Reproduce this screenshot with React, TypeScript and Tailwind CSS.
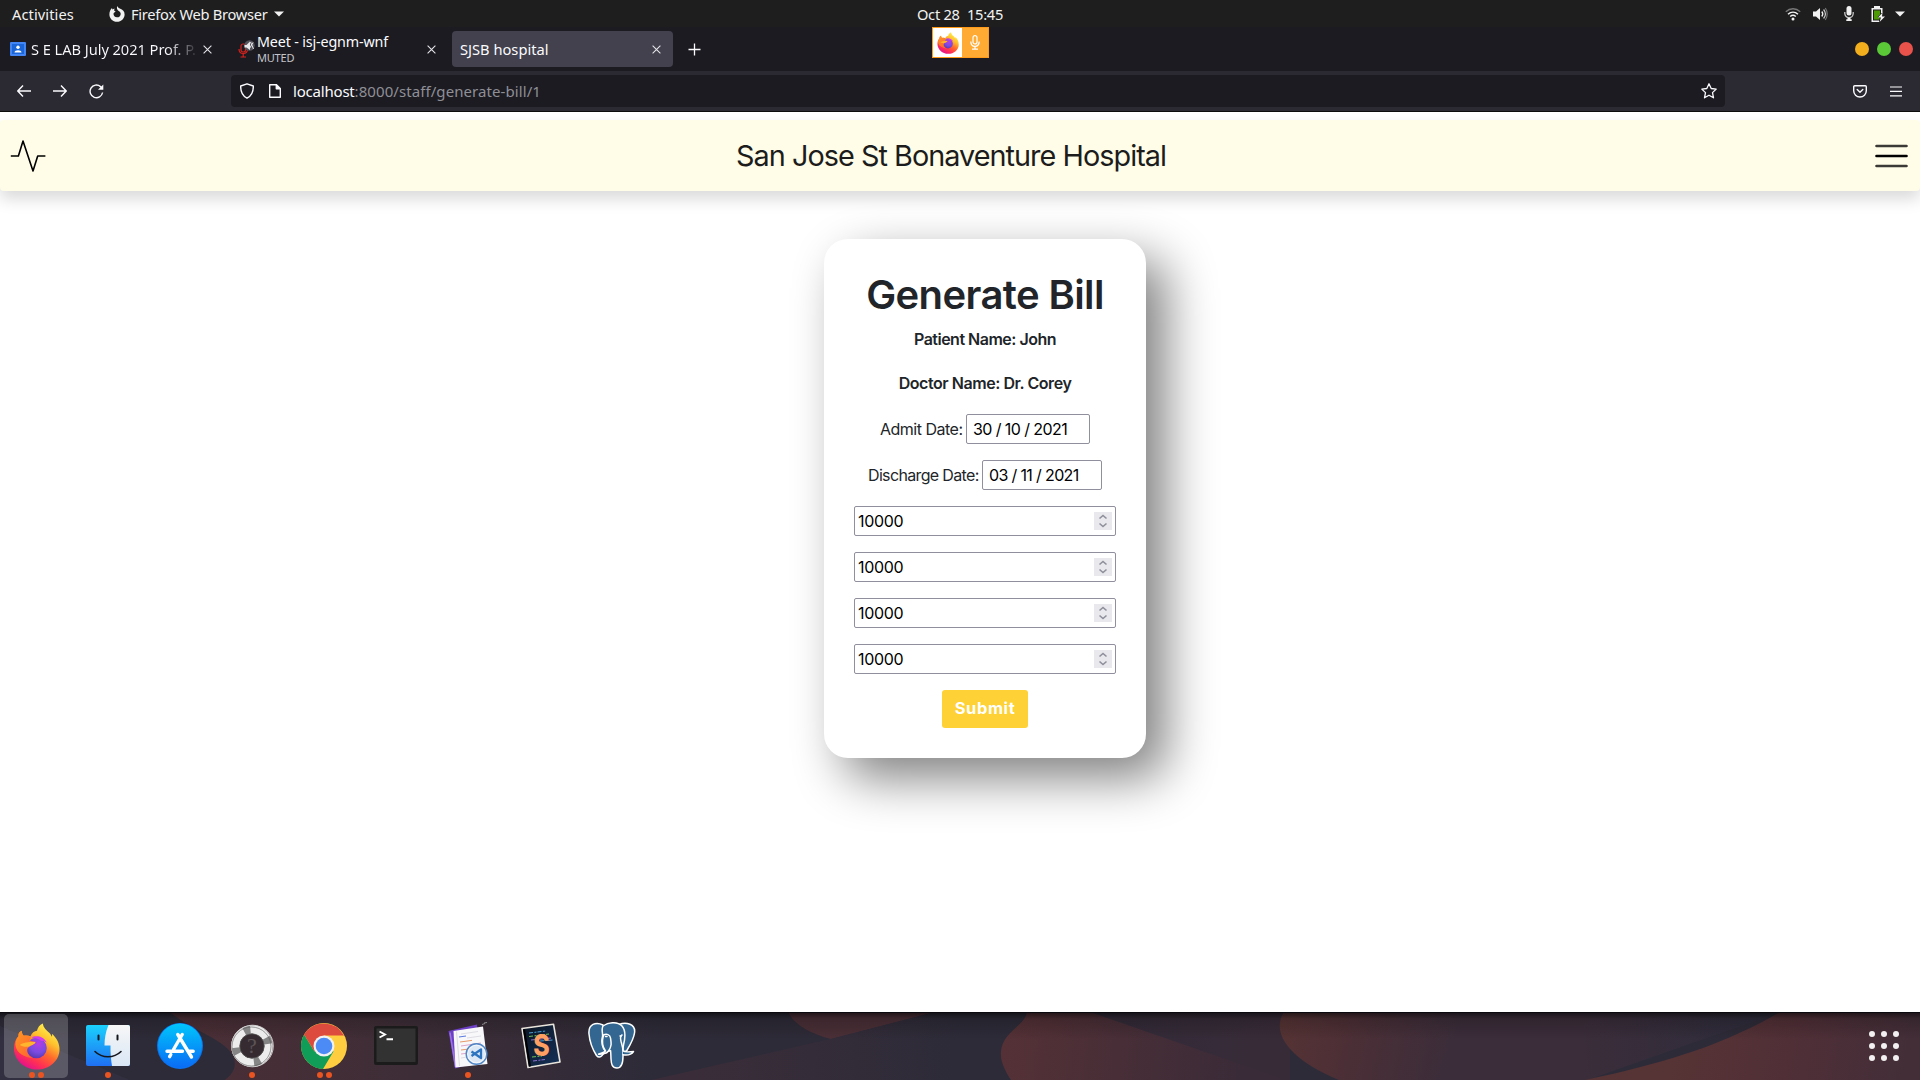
import React from "react";

const ubuntu = "font-['Noto_Sans',sans-serif]";
const product = "font-['Inter',sans-serif]";

function FirefoxLogo({ size, id }: { size: number; id: string }) {
  return (
    <svg width={size} height={size} viewBox="0 0 48 48">
      <defs>
        <linearGradient id={id + "a"} x1="0.8" y1="0.05" x2="0.25" y2="0.95">
          <stop offset="0" stopColor="#fff44f" />
          <stop offset="0.3" stopColor="#ffc02e" />
          <stop offset="0.55" stopColor="#ff6a2b" />
          <stop offset="0.8" stopColor="#ff2f55" />
          <stop offset="1" stopColor="#e3128c" />
        </linearGradient>
        <radialGradient id={id + "b"} cx="0.6" cy="0.3" r="0.7">
          <stop offset="0" stopColor="#b53be8" />
          <stop offset="0.6" stopColor="#7a4be0" />
          <stop offset="1" stopColor="#5b3bb5" />
        </radialGradient>
        <linearGradient id={id + "c"} x1="0" y1="0" x2="1" y2="1">
          <stop offset="0" stopColor="#ff9a1f" />
          <stop offset="1" stopColor="#ff5a36" />
        </linearGradient>
      </defs>
      <path
        d="M30.5 0.5C31 5 34 7 37 10c1 1 2 2.300 2.500 4 .5-.8.6-2 .5-3 4.500 4.500 7.500 9.500 7.500 16C47.500 38.500 37 47.500 24.500 47.500S1 38 1 26c0-6 2-10 4.500-12.500C5.300 10.500 7 8.500 9 8c-.2 2 .6 4 2 5 2-.6 5-.3 7 .5 1-3.500 4-5 6.500-5.500C25 5 27 2 30.500.5Z"
        fill={"url(#" + id + "a)"}
      />
      <circle cx="24" cy="25.500" r="10.500" fill={"url(#" + id + "b)"} />
      <path d="M19 15c4-2.500 12-2 15.500 5-2-1.500-4-2-5.500-1.500-3-3-6.500-3-10-3.500Z" fill="#d43bea" />
      <path
        d="M5.500 13.500C5.300 10.500 7 8.500 9 8c-.2 2 .6 4 2 5 2.500-.5 5-.2 7 1-1 2-.5 3.500 0 4.500 2 .3 4 .5 5 1-.5 2.500-4 3-6 4.500-1.500 1-2.500 2-2.500 4 0 3 2 6 6 8C12 35 3 31 2.500 22c.2-4 1.500-6.800 3-8.500Z"
        fill={"url(#" + id + "c)"}
      />
      <path d="M7 22.500c3-2.500 8-3 16-3-1 3-4.500 3-6.500 4.500-4 .8-7 0-9.500-1.500Z" fill="#ffb52e" />
    </svg>
  );
}

function TopBar() {
  return (
    <div className={`flex h-[27px] items-center justify-between bg-[#1e1e1e] text-[14.670px] text-[#f2f2f2] ${ubuntu}`}>
      <div className="flex w-[900px] items-center pl-3">
        <span className="w-[97px] whitespace-nowrap tracking-[0.080px]">Activities</span>
        <svg width="16" height="16" viewBox="0 0 16 16" className="mr-[6px]">
          <path
            d="M8.500 0c.2 1.300 1 2 2.300 2.600C13.800 3.500 15.600 5.500 15.600 8.400c0 4.100-3.400 7.300-7.600 7.300S.4 12.500.4 8.400C.4 5.600 1.400 3.400 3 2l.4 1.400 2-.8-.2 2.200 1.500.6c-.9.6-2 1-2.200 2.400C4.400 9.700 5.800 11.300 8 11.300s3.700-1.500 3.700-3.400c0-1.500-.8-2.500-2-3C8 4 7.300 1.700 8.500 0Z"
            fill="#f2f2f2"
          />
        </svg>
        <span className="w-[137px] whitespace-nowrap tracking-[-0.270px]">Firefox Web Browser</span>
        <svg width="10" height="6" viewBox="0 0 10 6" className="ml-[6px]">
          <path d="M0 .5h10L5 5.500Z" fill="#f2f2f2" />
        </svg>
      </div>
      <div className="whitespace-pre tracking-[-0.250px]">Oct 28  15:45</div>
      <div className="flex w-[900px] items-center justify-end pr-[15px]">
        <svg width="16" height="14" viewBox="0 0 16 14" fill="none" className="mr-[12px]">
          <path d="M.8 4.800C5 .8 11 .8 15.200 4.800" stroke="#777" strokeWidth="1.400" />
          <path d="M3 7.200c3-2.700 7-2.700 10 0M5.200 9.500c1.800-1.500 3.800-1.500 5.600 0" stroke="#f2f2f2" strokeWidth="1.500" />
          <circle cx="8" cy="12" r="1.500" fill="#f2f2f2" />
        </svg>
        <svg width="15" height="14" viewBox="0 0 15 14" fill="none" className="mr-[16px]">
          <path d="M0 4.500h3L7 1v12L3 9.500H0Z" fill="#f2f2f2" />
          <path d="M8.800 4.500c1.200 1.500 1.200 3.500 0 5" stroke="#f2f2f2" strokeWidth="1.300" />
          <path d="M10.600 2.500c2.200 2.700 2.200 6.300 0 9" stroke="#ccc" strokeWidth="1.200" />
          <path d="M12.300 1c2.500 3.500 2.500 8.500 0 12" stroke="#777" strokeWidth="1.200" />
        </svg>
        <svg width="10" height="15" viewBox="0 0 10 15" fill="none" className="mr-[17px]">
          <rect x="2.500" y="0" width="5" height="9.500" rx="2.500" fill="#f2f2f2" />
          <path d="M.8 6v1.500a4.200 4.200 0 0 0 8.400 0V6" stroke="#c8c8c8" strokeWidth="1.300" />
          <path d="M3.500 12h3v1.200h1.200V15H2.300v-1.800h1.200Z" fill="#f2f2f2" />
        </svg>
        <svg width="14" height="16" viewBox="0 0 14 16" className="mr-[10px]">
          <path d="M3 0h6v2h2.500v5H10V3.500H2v11h6V16H.5V2H3Z" fill="#f2f2f2" />
          <path d="M3 4.500h6v4L6.500 11l2 1v1.500H3Z" fill="#4e9a06" />
          <path d="M11.500 6.500 7 11.500h3L8.500 16 14 10.500h-3Z" fill="#f2f2f2" />
        </svg>
        <svg width="10" height="6" viewBox="0 0 10 6">
          <path d="M0 .5h10L5 5.500Z" fill="#f2f2f2" />
        </svg>
      </div>
    </div>
  );
}

function Close() {
  return (
    <svg width="9" height="9" viewBox="0 0 9 9" stroke="#e4e4e8" strokeWidth="1.100" className="shrink-0">
      <path d="M.6.6l7.800 7.800M8.400.6L.6 8.400" />
    </svg>
  );
}

function TabBar() {
  return (
    <div className={`flex h-[44px] items-center bg-[#1c1b22] text-[14.670px] text-[#fbfbfe] ${ubuntu}`}>
      <div className="flex w-[229px] items-center pl-[10px]">
        <svg width="16" height="14" viewBox="0 0 16 14" className="mr-[5px] shrink-0">
          <rect width="16" height="14" rx="1" fill="#4285f4" />
          <rect x="2" y="2" width="12" height="10" fill="#1a66d8" />
          <circle cx="8" cy="5.300" r="1.700" fill="#fff" />
          <path d="M4.500 10.500c0-3 7-3 7 0Z" fill="#fff" />
        </svg>
        <div className="mr-[6px] w-[166px] overflow-hidden whitespace-nowrap bg-gradient-to-r from-[#fbfbfe] from-[82%] to-[#fbfbfe10] bg-clip-text tracking-[-0.060px] text-transparent">
          S E LAB July 2021 Prof. P.
        </div>
        <Close />
      </div>
      <div className="flex w-[223px] items-center pl-[9px]">
        <svg width="18" height="20" viewBox="0 0 18 20" fill="none" className="mr-px shrink-0">
          <rect x="3" y="5" width="4.500" height="8" rx="2" stroke="#d7221c" strokeWidth="1.200" />
          <path d="M1 10c0 6 8.500 6 8.500 0M5.200 14.500V18M2.500 18h5.500" stroke="#d7221c" strokeWidth="1.200" />
          <circle cx="11.500" cy="6.500" r="5.200" fill="#55545c" />
          <path d="M6.500 6h2L12 2.500V11L8.500 8.500h-2Z" fill="#e8e8ea" />
          <path d="M12.500 3l3 7M15 3.500l-3.500 6" stroke="#e8e8ea" strokeWidth="1" />
        </svg>
        <div className="w-[170px]">
          <div className="text-[14.300px] leading-[16px] whitespace-nowrap tracking-[-0.150px]">Meet - isj-egnm-wnf</div>
          <div className="text-[11px] leading-[15px] tracking-[-0.200px] text-[#c4c4c9]">MUTED</div>
        </div>
        <Close />
      </div>
      <div className="flex h-9 w-[221px] items-center justify-between rounded-[4px] bg-[#42414d] pr-[12px] pl-2">
        <span>SJSB hospital</span>
        <Close />
      </div>
      <svg width="13" height="13" viewBox="0 0 13 13" className="ml-[15px]" stroke="#fbfbfe" strokeWidth="1.300">
        <path d="M6.500.5v12M.5 6.500h12" />
      </svg>
      <div className="ml-[231px] flex h-[31px] w-[57px] self-start border border-[#ff9a1a] bg-[#ffaa33]">
        <div className="flex w-[29px] items-center justify-center bg-white">
          <FirefoxLogo size={22} id="mini" />
        </div>
        <div className="flex flex-1 items-center justify-center">
          <svg width="10" height="15" viewBox="0 0 10 15" fill="none" stroke="#fff" strokeWidth="1.200">
            <rect x="3" y=".7" width="4" height="8.300" rx="2" />
            <path d="M.8 6.500c0 6.500 8.400 6.500 8.400 0M5 11.500V14M2 14.200h6" />
          </svg>
        </div>
      </div>
      <div className="mr-[7px] ml-auto flex items-center gap-2">
        <span className="size-[14px] rounded-full bg-[#f2ae1c]" />
        <span className="size-[14px] rounded-full bg-[#5ac837]" />
        <span className="size-[14px] rounded-full bg-[#e9524a]" />
      </div>
    </div>
  );
}

function Toolbar() {
  return (
    <div className={`flex h-[41px] items-center border-b border-[#0c0c0d] bg-[#2b2a33] text-[#fbfbfe] ${ubuntu}`}>
      <div className="flex w-[231px] items-center pl-[17px]">
        <svg width="14" height="12" viewBox="0 0 14 12" fill="none" stroke="#fbfbfe" strokeWidth="1.400" className="mr-[22px]">
          <path d="M14 6H.8M6 .5.8 6 6 11.500" />
        </svg>
        <svg width="14" height="12" viewBox="0 0 14 12" fill="none" stroke="#fbfbfe" strokeWidth="1.400" className="mr-[22px]">
          <path d="M0 6h13.200M8 .5 13.200 6 8 11.500" />
        </svg>
        <svg width="15" height="15" viewBox="0 0 15 15" fill="none">
          <path d="M13.600 8.500A6.300 6.300 0 1 1 11.500 2.600L12.800 4" stroke="#fbfbfe" strokeWidth="1.400" />
          <path d="M14.300.5v5.200H9Z" fill="#fbfbfe" />
        </svg>
      </div>
      <div className="flex h-8 w-[1494px] items-center rounded-[4px] bg-[#1c1b22] pr-2 pl-[9px]">
        <svg width="14" height="16" viewBox="0 0 14 16" fill="none" stroke="#fbfbfe" strokeWidth="1.400" strokeLinejoin="round" className="mr-[15px]">
          <path d="M7 .8 13.300 3c.2 5.800-1.800 10-6.300 12.200C2.500 13 .5 8.800.7 3Z" />
        </svg>
        <svg width="12" height="14" viewBox="0 0 12 14" fill="none" stroke="#fbfbfe" strokeWidth="1.400" strokeLinejoin="round" className="mr-[12px]">
          <path d="M.7.7h6.600l4 4v8.600H.7Z" />
          <path d="M7.300.7v4h4Z" fill="#fbfbfe" />
        </svg>
        <div className="pt-px text-[15px] whitespace-nowrap tracking-[0.080px]">
          <span className="tracking-[-0.200px]">localhost</span>
          <span className="text-[#8f8f96]">:8000/staff/generate-bill/1</span>
        </div>
        <svg width="16" height="16" viewBox="0 0 16 16" fill="none" stroke="#fbfbfe" strokeWidth="1.300" strokeLinejoin="round" className="ml-auto">
          <path d="m8 .8 2.200 4.700 5 .6-3.700 3.500 1 5.200L8 12.200l-4.500 2.600 1-5.200L.8 6.100l5-.6Z" />
        </svg>
      </div>
      <div className="ml-auto flex items-center gap-[23px] pr-[18px]">
        <svg width="14" height="13" viewBox="0 0 14 13" fill="none" stroke="#fbfbfe" strokeWidth="1.400" strokeLinecap="round" strokeLinejoin="round">
          <path d="M1.700.7h10.600a1 1 0 0 1 1 1v4a6.300 6.300 0 0 1-12.600 0v-4a1 1 0 0 1 1-1Z" />
          <path d="M4.200 4.500 7 7.200l2.800-2.700" />
        </svg>
        <svg width="12" height="11" viewBox="0 0 12 11" stroke="#fbfbfe" strokeWidth="1.200">
          <path d="M0 1h12M0 5.400h12M0 9.800h12" />
        </svg>
      </div>
    </div>
  );
}

function NumberField() {
  return (
    <div className="flex h-[30px] w-[262px] items-center justify-between rounded-[2px] border border-[#8f8f9d] pr-[3px] pl-[3px] text-black">
      <span className="-mt-px tracking-[-0.300px]">10000</span>
      <svg width="18" height="18" viewBox="0 0 18 18" fill="none" stroke="#8f8f9d" strokeWidth="1.600">
        <rect width="18" height="18" fill="#e9e9ed" stroke="none" />
        <path d="M5.500 6.500 9 3.500l3.500 3M5.500 11.500l3.500 3 3.500-3" />
      </svg>
    </div>
  );
}

function Page() {
  return (
    <main className={`flex h-[900px] flex-col items-center bg-white pt-2 text-[#212529] ${product}`}>
      <nav className="flex h-[71px] w-full items-center justify-between rounded-[4px] bg-[#fffde7] pr-[11px] pl-[10px] shadow-[0_8px_16px_rgba(0,0,0,0.15)]">
        <svg width="36" height="34" viewBox="0 0 36 34" fill="none" stroke="#000" strokeWidth="1.600" strokeLinejoin="round">
          <path d="M.8 17h7.600L13 2l10 30 4.700-15h7.700" />
        </svg>
        <h1 className="-ml-[19px] text-[28.800px] whitespace-nowrap tracking-[-0.960px] text-[#1c1c1c]">San Jose St Bonaventure Hospital</h1>
        <svg width="34" height="24" viewBox="0 0 34 24" strokeWidth="2.600" strokeLinecap="round">
          <path d="M1.500 2h30M1.500 22h30" stroke="#3b3a36" />
          <path d="M1.500 12h30" stroke="#000" />
        </svg>
      </nav>
      <form className="mt-12 ml-[50px] flex h-[519px] w-[322px] flex-col items-center rounded-[24px] bg-white text-[16px] leading-6 shadow-[20px_20px_50px_grey]">
        <h2 className="mt-8 text-[40px] leading-[48px] font-semibold whitespace-nowrap tracking-[-0.600px]">Generate Bill</h2>
        <p className="mt-2 font-semibold whitespace-nowrap tracking-[-0.500px]">Patient Name: John</p>
        <p className="mt-5 font-semibold whitespace-nowrap tracking-[-0.440px]">Doctor Name: Dr. Corey</p>
        <div className="mt-[19px] flex items-center gap-1">
          <span className="-mt-px w-[82px] whitespace-nowrap tracking-[-0.500px]">Admit Date:</span>
          <div className="flex h-[30px] w-[124px] items-center rounded-[2px] border border-[#8f8f9d] pb-px pl-[6px] whitespace-nowrap tracking-[-0.580px] text-black">30 / 10 / 2021</div>
        </div>
        <div className="mt-4 flex items-center gap-[3px]">
          <span className="-mt-px w-[111px] whitespace-nowrap tracking-[-0.650px]">Discharge Date:</span>
          <div className="flex h-[30px] w-[120px] items-center rounded-[2px] border border-[#8f8f9d] pb-px pl-[6px] whitespace-nowrap tracking-[-0.650px] text-black">03 / 11 / 2021</div>
        </div>
        <div className="mt-4 flex flex-col gap-4">
          <NumberField />
          <NumberField />
          <NumberField />
          <NumberField />
        </div>
        <button type="button" className="mt-4 h-[38px] w-[86px] rounded-[3px] bg-[#fed136] pb-[2px] text-[16.500px] font-bold tracking-[0.600px] text-white">
          Submit
        </button>
      </form>
    </main>
  );
}

function Wallpaper() {
  return (
    <svg width="1920" height="68" viewBox="0 0 1920 68" className="absolute inset-0">
      <defs>
        <linearGradient id="w1" gradientUnits="userSpaceOnUse" x1="170" y1="0" x2="660" y2="0">
          <stop offset="0" stopColor="#4c2f36" />
          <stop offset="0.5" stopColor="#3d2d37" />
          <stop offset="1" stopColor="#2d2b38" />
        </linearGradient>
        <linearGradient id="w2" gradientUnits="userSpaceOnUse" x1="690" y1="60" x2="960" y2="40">
          <stop offset="0" stopColor="#3a2d39" />
          <stop offset="1" stopColor="#2d2b38" />
        </linearGradient>
        <linearGradient id="w3" gradientUnits="userSpaceOnUse" x1="1000" y1="30" x2="1240" y2="60">
          <stop offset="0" stopColor="#553136" />
          <stop offset="1" stopColor="#3a2b38" />
        </linearGradient>
        <linearGradient id="w4" gradientUnits="userSpaceOnUse" x1="1280" y1="10" x2="1450" y2="50">
          <stop offset="0" stopColor="#563334" />
          <stop offset="0.4" stopColor="#4c2f36" />
          <stop offset="1" stopColor="#3b2d3a" />
        </linearGradient>
        <linearGradient id="w5" gradientUnits="userSpaceOnUse" x1="1680" y1="20" x2="1900" y2="70">
          <stop offset="0" stopColor="#563334" />
          <stop offset="0.5" stopColor="#502f37" />
          <stop offset="1" stopColor="#432e38" />
        </linearGradient>
        <linearGradient id="w6" gradientUnits="userSpaceOnUse" x1="1090" y1="0" x2="1280" y2="0">
          <stop offset="0" stopColor="#322b38" />
          <stop offset="1" stopColor="#382b38" />
        </linearGradient>
        <linearGradient id="w7" gradientUnits="userSpaceOnUse" x1="1580" y1="0" x2="1780" y2="0">
          <stop offset="0" stopColor="#2d2c3b" stopOpacity="0" />
          <stop offset="1" stopColor="#2d2c3b" />
        </linearGradient>
        <linearGradient id="wt" x1="0" y1="0" x2="0" y2="1">
          <stop offset="0" stopColor="#000" stopOpacity="0.6" />
          <stop offset="0.1" stopColor="#000" stopOpacity="0.18" />
          <stop offset="0.4" stopColor="#000" stopOpacity="0" />
        </linearGradient>
      </defs>
      <rect width="1920" height="68" fill="#2e2b38" />
      <path d="M0 14 130 68H0Z" fill="#323040" />
      <path d="M170 0C190 18 228 28 234 46c3 10-2 16-9 22H660V0Z" fill="url(#w1)" />
      <path d="M788 0c6 12 20 21 43 27L935 0Z" fill="#4a2f37" />
      <path d="M652 68 831 27 935 0h90v68Z" fill="url(#w2)" />
      <path d="M1085 0h205v68h-50Z" fill="url(#w6)" />
      <path d="M1027 0c-2 14-25 20-26 40-1 10 5 20 10 28h269v-2L1090 0Z" fill="url(#w3)" />
      <path d="M1284 0c-12 18 0 45 55 68h248L1780 0Z" fill="url(#w4)" />
      <path d="M1580 0h200l-190 68Z" fill="url(#w7)" />
      <path d="M1585 68C1660 52 1720 35 1780 0h140v68Z" fill="url(#w5)" />
      <rect width="1920" height="68" fill="url(#wt)" />
      <rect width="1920" height="1" fill="#0b0b0f" />
    </svg>
  );
}

function Slot({ dots, active, children }: { dots: number; active?: boolean; children: React.ReactNode }) {
  return (
    <div className={active ? "relative flex size-16 items-center justify-center rounded-[5px] bg-white/20" : "relative flex size-16 items-center justify-center"}>
      {children}
      <div className="absolute inset-x-0 bottom-0 flex justify-center gap-[3px]">
        {Array.from({ length: dots }, (_, i) => (
          <span key={i} className="size-[6px] rounded-full bg-[#e95420]" />
        ))}
      </div>
    </div>
  );
}

function Finder() {
  return (
    <svg width="44" height="42" viewBox="0 0 44 42">
      <defs>
        <linearGradient id="fa" x1="0" y1="0" x2="0" y2="1">
          <stop offset="0" stopColor="#1ad1fd" />
          <stop offset="1" stopColor="#1f6ff2" />
        </linearGradient>
        <linearGradient id="fb" x1="0" y1="0" x2="0" y2="1">
          <stop offset="0" stopColor="#f7f7f7" />
          <stop offset="1" stopColor="#d9e6f5" />
        </linearGradient>
      </defs>
      <rect width="44" height="41" rx="2" fill="url(#fa)" />
      <path d="M22.500 0C19.500 7 18.500 14 18.500 20.500h6C24.300 28 25 35 26 41h16a2 2 0 0 0 2-2V2a2 2 0 0 0-2-2Z" fill="url(#fb)" />
      <path d="M12.500 10.500v4M31.500 10.500v4" stroke="#15161c" strokeWidth="2" strokeLinecap="round" />
      <path d="M9 26.500c7 7 19 7 26 0" stroke="#15161c" strokeWidth="1.600" fill="none" strokeLinecap="round" />
    </svg>
  );
}

function AppStore() {
  return (
    <svg width="46" height="46" viewBox="0 0 46 46">
      <defs>
        <linearGradient id="as" x1="0" y1="0" x2="0" y2="1">
          <stop offset="0" stopColor="#00c6fb" />
          <stop offset="1" stopColor="#0a6cf5" />
        </linearGradient>
      </defs>
      <circle cx="23" cy="23" r="23" fill="#0a72f0" />
      <circle cx="23" cy="22.500" r="22" fill="url(#as)" />
      <g stroke="#fff" strokeWidth="3.400" strokeLinecap="round">
        <path d="M25.200 11.500 16.500 26.500M20.800 11.500 34.500 34M10 28.200h15.500M31 28.200h5.200" />
        <path d="M13.800 31.500 12.600 33.600" />
      </g>
    </svg>
  );
}

function Help() {
  return (
    <svg width="44" height="44" viewBox="0 0 44 44">
      <circle cx="22" cy="22" r="16.500" fill="none" stroke="#ececec" strokeWidth="8.500" />
      <circle cx="22" cy="22" r="16.500" fill="none" stroke="#858585" strokeWidth="8.500" strokeDasharray="6.500 19.420" transform="rotate(-30 22 22)" />
      <circle cx="22" cy="22" r="12.200" fill="#352b30" stroke="#555" strokeWidth="0.800" />
      <circle cx="22.500" cy="22" r="20.800" fill="none" stroke="#d8d8d8" strokeWidth="0.900" />
      <circle cx="21.500" cy="22.500" r="19.500" fill="none" stroke="#5a5a5a" strokeWidth="0.600" />
      <text x="22" y="29" textAnchor="middle" fontSize="22" fontFamily="Liberation Serif, serif" fill="#5c5356">?</text>
    </svg>
  );
}

function Chrome() {
  return (
    <svg width="46" height="46" viewBox="0 0 46 46">
      <circle cx="23" cy="23" r="23" fill="#ffcd40" />
      <path d="M3.080 11.500A23 23 0 0 0 22 46L32.500 28.500 23 23 13.500 28.500Z" fill="#0f9d58" />
      <path d="M3.080 11.500 13.500 28.500 23 12.500h20A23 23 0 0 0 3.080 11.500Z" fill="#dd4b3e" />
      <circle cx="23" cy="23" r="10.500" fill="#f1f1f1" />
      <circle cx="23" cy="23" r="8.300" fill="#4c8bf5" />
    </svg>
  );
}

function Terminal() {
  return (
    <svg width="44" height="40" viewBox="0 0 44 40">
      <rect width="44" height="39" rx="2" fill="#1b1b1b" />
      <rect x="2.500" y="2.500" width="39" height="33.500" fill="#323232" />
      <path d="m5.500 5.500 5.500 3-5.500 3M12.500 13.300h6.500" stroke="#fff" strokeWidth="1.900" fill="none" />
    </svg>
  );
}

function CodeDocs() {
  return (
    <svg width="42" height="48" viewBox="0 0 42 48">
      <path d="M1.500 9 30 2.500 32 40 8 46.500Z" fill="#6c3fc4" />
      <path d="M3 10.500 8.500 45" stroke="#9c74e6" strokeWidth="1.500" />
      <path d="M6.500 9 36 4.500 40.500 42 8.500 45.500Z" fill="#f8f8fa" />
      <path d="M35 2.500 38 1.500M37 1 40 .5" stroke="#888" strokeWidth="1" />
      <path d="M9.500 9.500 12.500 44" stroke="#ddd" strokeWidth="1" />
      <path d="m12 15 7-1" stroke="#5b7be0" strokeWidth="1.200" />
      <path d="m13 20 12-1.600M14 28l8-1" stroke="#e79a68" strokeWidth="1" />
      <path d="m14 24 20-3M14 32l8-1" stroke="#e0a5c8" strokeWidth="1" />
      <path d="m14 12 17-2.500M14 36l6-1M20 16l14-2" stroke="#d5d5dd" strokeWidth=".8" />
      <circle cx="29.500" cy="32" r="10.300" fill="#f1f5fa" stroke="#4f86c6" strokeWidth="1.400" />
      <circle cx="29.500" cy="32" r="8.300" fill="#dce8f5" />
      <path d="m24.500 29.500 9.500 6.500V27.500l-9.500 6.500" stroke="#2d74c0" strokeWidth="2.300" fill="none" strokeLinejoin="round" />
    </svg>
  );
}

function Sublime() {
  return (
    <svg width="42" height="46" viewBox="0 0 42 46" className="ml-[2px]">
      <defs>
        <linearGradient id="sg" x1="0" y1="0" x2="1" y2="1">
          <stop offset="0" stopColor="#0c1420" />
          <stop offset="1" stopColor="#15325a" />
        </linearGradient>
      </defs>
      <path d="M2 5.500 33.500 1.200 40 39 8 44.500Z" fill="url(#sg)" stroke="#e9e5dc" strokeWidth="1.600" strokeLinejoin="round" />
      <path d="m4 6.500 6 37" stroke="#000" strokeWidth="2" />
      <g strokeWidth="1" strokeDasharray="4 1.500 2 1">
        <path d="m9 10 17-2" stroke="#4aa3d8" />
        <path d="m9 13.500 20-2.500M12 34l10-1" stroke="#6fbf58" />
        <path d="m11 17 20-2M13 38l12-1.500" stroke="#8b6fd0" />
        <path d="m20 18 13-1" stroke="#4aa3d8" />
      </g>
      <text x="21" y="33" textAnchor="middle" fontSize="30" fontWeight="800" fontFamily="Inter, sans-serif" fill="#ff9f62" transform="translate(4 0) scale(.83 1)">S</text>
    </svg>
  );
}

function Elephant() {
  return (
    <svg width="48" height="48" viewBox="0 0 48 48" fill="#336791" stroke="#fff" strokeWidth="1.500" strokeLinejoin="round" strokeLinecap="round">
      <path d="M15 3C8-.5 0 2 1 12c.6 7 4 16 7.500 21.500 2 2.500 4 1.800 5.500 0l3-4Z" />
      <path d="M31 2.500C38-.5 48 2 46.500 11c-1 7-5 13-8 18l-5 1Z" />
      <path d="M15 4c6-4.500 15-4.200 19 0 4.500 5 3 13 1.500 19-.8 3.200-.5 7-.5 11 0 6-1 12-6 12s-5.700-4-6-9c-.2-3 0-6-.5-8.500-3 1.500-6 .5-7-2-2-4-2-8-1-12 .5-4-1.500-7 .5-10.500Z" />
      <path d="M15.500 13c3-1.500 6.500-.5 7 3 .8 5 1.500 8-2 13-2 3-8 3.500-10 3.200 2-1.200 5-1.200 7-3.200-3-4-4-9-2-16ZM34 13c-2.500 1.500-1.500 4-.8 7 .8 3 1.800 6 1.800 9 2 1.500 6 .8 10.500.6-2 3-6.500 3.800-10.500 3.200" fill="#336791" />
      <path d="M17.500 14.500h1.500M32 14h1" />
    </svg>
  );
}

function Dock() {
  const dots = Array.from({ length: 9 }, (_, i) => i);
  return (
    <div className="relative flex h-[68px] justify-between overflow-hidden">
      <Wallpaper />
      <div className="relative flex gap-2 pt-[2px] pl-1">
        <Slot dots={2} active><FirefoxLogo size={47} id="dock" /></Slot>
        <Slot dots={1}><Finder /></Slot>
        <Slot dots={0}><AppStore /></Slot>
        <Slot dots={1}><Help /></Slot>
        <Slot dots={2}><Chrome /></Slot>
        <Slot dots={0}><Terminal /></Slot>
        <Slot dots={1}><CodeDocs /></Slot>
        <Slot dots={0}><Sublime /></Slot>
        <Slot dots={0}><Elephant /></Slot>
      </div>
      <div className="relative mt-[19px] mr-[21px] grid h-[30px] grid-cols-3 gap-[6px]">
        {dots.map((d) => (
          <span key={d} className="size-[6px] rounded-full bg-[#f2f0f0]" />
        ))}
      </div>
    </div>
  );
}

export default function App() {
  return (
    <div className="flex h-[1080px] w-[1920px] flex-col overflow-hidden bg-white">
      <TopBar />
      <TabBar />
      <Toolbar />
      <Page />
      <Dock />
    </div>
  );
}
